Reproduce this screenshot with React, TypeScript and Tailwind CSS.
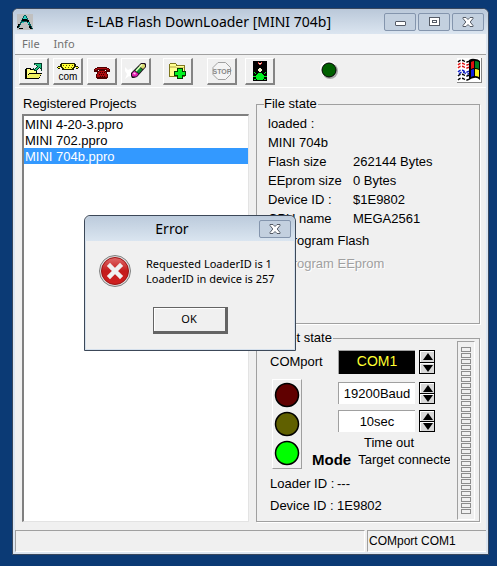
import type { ReactNode } from "react";
import clsx from "clsx";

const projects = ["MINI 4-20-3.ppro", "MINI 702.ppro", "MINI 704b.ppro"];

const fileInfo = [
  { label: "Flash size", value: "262144 Bytes" },
  { label: "EEprom size", value: "0 Bytes" },
  { label: "Device ID :", value: "$1E9802" },
  { label: "CPU name", value: "MEGA2561" },
];

const lamps = ["#600000", "#606000", "#00ff00"];

/* ---------- icons ---------- */

function AppIcon() {
  return (
    <svg width="16" height="16" viewBox="0 0 16 16" shapeRendering="crispEdges">
      <rect width="16" height="16" fill="#c0c0c0" />
      <path d="M6 1h3v1h1v2h1v2h1v2h1v2h1v2h1v2h1v1h-3v-2h-1v-2h-1v-2h-1v-1h-5v1h-1v2h-1v2h-1v1h-1v-2h1v-2h1v-2h1v-2h1v-2h1v-2h1z" fill="#005858" />
      <path d="M7 2h2v2h1v2h-4v-2h1zM5 8h2v1h-2zM11 8h1v2h-1z" fill="#30d0c0" />
      <path d="M5 5h5v1h2v2h-2v-1h-5zM1 10h2v1h-1v2h-1v1h-1v-2h1zM2 14h4v1h-4zM12 12h2v2h1v1h-2v-1h-1z" fill="#000" />
    </svg>
  );
}

function OpenIcon() {
  return (
    <svg width="18" height="16" viewBox="0 0 18 16" shapeRendering="crispEdges">
      <path d="M1 5h5v1h6v4h5v1h-1v2h-1v2h-1v1h-14v-10h1z" fill="#000" />
      <path d="M2 6h3v1h6v3h-7v1h-1v2h-1z" fill="#ffff80" />
      <path d="M4 11h12v1h-1v2h-1v1h-12v-2h1v-1h1z" fill="#f0f060" />
      <path d="M9 0h8v8h-1v-2h-1v-1h-1v1h-1v1h-1v1h-3v-1h-1v-2h1v1h1v-1h1v-1h1v-1h-1v-1h-2z" fill="#003828" />
      <path d="M10 1h6v4h-1v-1h-1v1h-1v1h-1v1h-2v-1h1v-1h1v-1h1v-1h-1v-1h-2z" fill="#20c080" />
    </svg>
  );
}

function ComIcon() {
  return (
    <svg width="24" height="19" viewBox="0 0 24 19">
      <g shapeRendering="crispEdges">
        <path d="M5 1h14v1h1v3h-1v1h-1v2h-12v-2h-1v-1h-1v-3h1z" fill="#202000" />
        <path d="M6 2h12v3h-1v1h-1v1h-8v-1h-1v-1h-1z" fill="#ffff30" />
        <path d="M7 3h1v1h-1zM10 3h1v1h-1zM13 3h1v1h-1zM16 3h1v1h-1zM9 5h1v1h-1zM12 5h1v1h-1zM15 5h1v1h-1z" fill="#605000" />
        <path d="M2 4h2v1h-2zM1 5h1v1h-1zM2 6h2v1h-2zM20 4h2v1h-2zM22 5h1v1h-1zM20 6h2v1h-2z" fill="#202000" />
        <path d="M2 5h2v1h-2zM20 5h2v1h-2z" fill="#ffff30" />
      </g>
      <text x="12" y="18" textAnchor="middle" fontFamily="Liberation Sans, sans-serif" fontSize="10">
        com
      </text>
    </svg>
  );
}

function PhoneIcon() {
  return (
    <svg width="16" height="12" viewBox="0 0 16 12" shapeRendering="crispEdges">
      <path d="M3 0h10v1h2v1h1v3h-4v-2h-1v1h1v1h1v2h1v4h-1v1h-10v-1h-1v-4h1v-2h1v-1h1v-1h-1v2h-4v-3h1v-1h2z" fill="#500000" />
      <path d="M3 1h10v1h2v1h-2v-1h-10v1h-2v-1h2zM5 4h6v1h1v2h1v3h-10v-3h1v-2h1z" fill="#b00c10" />
      <path d="M6 5h1v1h-1zM8 5h1v1h-1zM10 5h1v1h-1zM5 7h1v1h-1zM7 7h1v1h-1zM9 7h1v1h-1zM6 9h1v1h-1zM8 9h1v1h-1zM10 9h1v1h-1z" fill="#380000" />
    </svg>
  );
}

function EraserIcon() {
  return (
    <svg width="24" height="20" viewBox="0 0 24 20">
      <path d="M1 6l3 3 4-2v6l1 4-4-2-4 3 2-5-2-3z" fill="#fff" />
      <path d="M17 2h4l1 1v3L13 16l-3 1H8l-1-2v-3z" fill="#201020" />
      <path d="M17.500 3H20l1 1v2l-2 2-4-3z" fill="#d8d870" />
      <path d="M14.500 5.500l4 3-3.500 4-4-3z" fill="#109030" />
      <path d="M18 3.500L12 10" stroke="#e8ffc0" strokeWidth="1.500" />
      <path d="M10.500 10l4 3-2 2.500H9L8 14.500v-2z" fill="#e020b0" />
      <path d="M9.500 12l2 1" stroke="#ffc0f0" strokeWidth="1.500" />
    </svg>
  );
}

function AddFolderIcon() {
  return (
    <svg width="19" height="18" viewBox="0 0 19 18" shapeRendering="crispEdges">
      <path d="M2 1h6v1h1v1h8v12h-16v-13h1z" fill="#807820" />
      <path d="M2 2h6v2h8v10h-14z" fill="#ffff90" />
      <path d="M2 4h6v1h8v1h-14z" fill="#d8d068" />
      <path d="M9 6h6v3h3v5h-3v3h-6v-3h-3v-5h3z" fill="#003800" />
      <path d="M10 7h4v3h3v3h-3v3h-4v-3h-3v-3h3z" fill="#00f020" />
    </svg>
  );
}

function StopIcon() {
  return (
    <svg width="20" height="18" viewBox="0 0 20 18">
      <path d="M6 .5h7.500l5 5v7l-5 5H6l-5-5v-7z" fill="#f4f4f4" stroke="#a0a0a0" />
      <text x="10" y="12" textAnchor="middle" fontFamily="Liberation Sans, sans-serif" fontSize="7" fontWeight="700" fill="#888">
        STOP
      </text>
    </svg>
  );
}

function TrafficIcon() {
  return (
    <svg width="14" height="20" viewBox="0 0 14 20" shapeRendering="crispEdges">
      <rect width="14" height="20" fill="#000" />
      <path d="M5 1h1v1h2v-1h1v2h-1v1h-2v-1h-1z" fill="#e04848" />
      <path d="M6 2h2v1h-2zM6 7h2v1h1v2h-1v1h-2v-1h-1v-2h1z" fill="#f0f0d0" />
      <path d="M5 12h4v1h1v1h1v4h-1v1h-6v-1h-1v-4h1v-1h1zM1 11h1v1h1v1h-1v-1h-1zM12 11h1v1h-1v1h-1v-1h1zM0 15h3v1h-3zM11 15h3v1h-3zM1 18h2v1h-2zM11 18h2v1h-2z" fill="#00f020" />
    </svg>
  );
}

function WindowsIcon() {
  return (
    <svg width="24" height="24" viewBox="0 0 24 24">
      <rect width="24" height="24" fill="#fff" />
      <g fill="none" strokeWidth="1.500" strokeDasharray="3 1.500">
        <path d="M1 4q3-3 6-1t5 0M1 18q3-3 6-1t5 0M1 22q3-3 6-1t5 0" stroke="#000" />
        <path d="M1 7q3-3 6-1t5 0M1 10q3-3 6-1t5 0" stroke="#e01010" />
        <path d="M1 14q3-3 6-1t5 0M2 16q3-3 6-1t5 0" stroke="#1020c0" />
      </g>
      <path d="M12 2q3-2 6-1 3 0 5 2v19q-3-3-6-2-2 0-5 2z" fill="#000" />
      <path d="M14 4q2-1 3-1v7q-1 0-3 1z" fill="#e01010" />
      <path d="M18 3q2 0 4 1v7q-2-1-4-1z" fill="#008020" />
      <path d="M14 12q2-1 3-1v7q-1 0-3 1z" fill="#1020e0" />
      <path d="M18 11q2 0 4 1v7q-2-1-4-1z" fill="#f8f020" />
    </svg>
  );
}

function CloseGlyph() {
  return (
    <svg width="12" height="10" viewBox="0 0 12 10">
      <path d="M1 .5h3l2 2 2-2h3v1L8.200 5 11 8.500v1H8l-2-2-2 2H1v-1L3.800 5 1 1.500z" fill="#fff" stroke="#555b66" />
    </svg>
  );
}

function ErrorIcon() {
  return (
    <svg width="32" height="32" viewBox="0 0 32 32">
      <defs>
        <linearGradient id="errorRed" x1="0" y1="0" x2="0" y2="1">
          <stop offset="0" stopColor="#e06a6a" />
          <stop offset="0.500" stopColor="#c41c1c" />
          <stop offset="1" stopColor="#d02020" />
        </linearGradient>
      </defs>
      <circle cx="16" cy="16" r="15.500" fill="#dcdcdc" stroke="#808080" />
      <circle cx="16" cy="16" r="13.500" fill="url(#errorRed)" stroke="#9c1414" />
      <path d="M11 11l10 10M21 11L11 21" stroke="#f0f0f0" strokeWidth="4.500" strokeLinecap="square" />
    </svg>
  );
}

/* ---------- small controls ---------- */

function CaptionButton({ label, children }: { label: string; children: ReactNode }) {
  return (
    <button
      aria-label={label}
      className="flex h-[18px] w-8 items-center justify-center rounded-[2px] border border-[#8495ad] bg-[#c3d0df]"
    >
      {children}
    </button>
  );
}

function ToolButton({ label, className, children }: { label: string; className?: string; children: ReactNode }) {
  return (
    <button
      aria-label={label}
      className={clsx(
        "flex h-[27px] w-[30px] items-center justify-center border-t border-r-2 border-b-2 border-l border-t-white border-r-[#858585] border-b-[#858585] border-l-white bg-[#f0f0f0]",
        className
      )}
    >
      {children}
    </button>
  );
}

function Spinner({ label }: { label: string }) {
  return (
    <div className="flex w-4 shrink-0 flex-col gap-px border border-black bg-black">
      <button aria-label={`${label} up`} className="flex flex-1 items-center justify-center border-t border-l border-white bg-[#d8d8d8]">
        <svg width="10" height="7" viewBox="0 0 10 7">
          <path d="M5 0l5 7H0z" />
        </svg>
      </button>
      <button aria-label={`${label} down`} className="flex flex-1 items-center justify-center border-t border-l border-white bg-[#d8d8d8]">
        <svg width="10" height="7" viewBox="0 0 10 7">
          <path d="M5 7l5-7H0z" />
        </svg>
      </button>
    </div>
  );
}

function Group({ title, className, children }: { title: string; className?: string; children: ReactNode }) {
  return (
    <fieldset className={clsx("min-w-0 border border-[#a0a0a0] shadow-[1px_1px_0_#fff]", className)}>
      <legend className="ml-[7px] h-4 bg-[#f0f0f0] pr-px leading-4">{title}</legend>
      {children}
    </fieldset>
  );
}

/* ---------- sections ---------- */

function ErrorDialog() {
  return (
    <div
      role="dialog"
      aria-labelledby="error-title"
      className="absolute top-[206px] left-[71px] flex h-[136px] w-[212px] flex-col rounded-t-md border border-[#3c4858] bg-[#f0f0f0] shadow-[inset_0_0_0_1px_#d5e0ec]"
    >
      <div className="flex h-[25px] items-center rounded-t-md bg-linear-to-b from-[#bccbdc] to-[#dae5f0] pr-1">
        <h2 id="error-title" className="flex-1 text-center font-['Noto_Sans'] text-sm">
          Error
        </h2>
        <CaptionButton label="Close">
          <CloseGlyph />
        </CaptionButton>
      </div>
      <div className="flex items-center gap-[15px] px-[14px] pt-[14px]">
        <ErrorIcon />
        <div className="font-['Noto_Sans'] text-[11px] leading-[15px] whitespace-nowrap">
          <p>Requested LoaderID is 1</p>
          <p>LoaderID in device is 257</p>
        </div>
      </div>
      <button className="mx-auto mt-5 h-[27px] w-[75px] border-t border-r-[3px] border-b-[3px] border-l border-[#646464] bg-[#f0f0f0] font-['Noto_Sans'] text-[11px] shadow-[inset_1px_1px_0_#fff]">
        OK
      </button>
    </div>
  );
}

function TargetState() {
  const field = "h-full w-full min-w-0 border-t border-l border-[#a0a0a0] text-center outline-none";

  return (
    <Group title="Target state" className="flex-1">
      <div className="flex gap-1 pr-1">
        <div className="min-w-0 flex-1 pl-[13px]">
          <div className="grid grid-cols-[64px_1fr_16px] gap-x-1 pt-1 pr-[18px]">
            <label htmlFor="comport" className="leading-6">COMport</label>
            <input id="comport" readOnly value="COM1" className={clsx(field, "bg-black pb-1 text-sm text-[#ffff30]")} />
            <Spinner label="COMport" />
          </div>
          <div className="mt-[5px] flex">
            <div className="flex h-[90px] w-[30px] shrink-0 flex-col items-center justify-around border-t border-r border-b border-l border-t-white border-r-[#a0a0a0] border-b-[#a0a0a0] border-l-white ml-0.5">
              {lamps.map((color) => (
                <svg key={color} width="26" height="26" viewBox="0 0 26 26">
                  <circle cx="13" cy="13" r="11.500" fill={color} stroke="#000" strokeWidth="1.500" />
                </svg>
              ))}
            </div>
            <div className="min-w-0 flex-1 pt-[3px]">
              <div className="mr-[18px] ml-9 flex flex-col gap-[6px]">
                <div className="flex h-[22px] gap-1">
                  <input aria-label="Baud rate" readOnly value="19200Baud" className={clsx(field, "bg-white")} />
                  <Spinner label="Baud rate" />
                </div>
                <div className="flex h-[22px] gap-1">
                  <input id="timeout" readOnly value="10sec" className={clsx(field, "bg-white")} />
                  <Spinner label="Time out" />
                </div>
              </div>
              <label htmlFor="timeout" className="mt-[3px] ml-[62px] block h-4 leading-4">Time out</label>
              <div className="flex items-center gap-[7px] pr-[3px] pl-[10px]">
                <b className="text-[15px] leading-[18px]">Mode</b>
                <span className="min-w-0 flex-1 overflow-hidden leading-[18px] whitespace-nowrap">Target connected</span>
              </div>
            </div>
          </div>
          <dl className="grid grid-cols-[67px_1fr] pt-1 leading-[22px]">
            <dt>Loader ID :</dt>
            <dd>---</dd>
            <dt>Device ID :</dt>
            <dd>1E9802</dd>
          </dl>
        </div>
        <div
          role="meter"
          aria-label="Progress"
          aria-valuenow={0}
          className="-mt-[5px] flex w-[18px] flex-col gap-px border-t border-r border-b border-l border-t-[#a0a0a0] border-r-white border-b-white border-l-[#a0a0a0] px-[3px] py-[5px]"
        >
          {Array.from({ length: 28 }, (_, i) => (
            <div key={i} className="h-[5px] border border-[#8c8c8c]" />
          ))}
        </div>
      </div>
    </Group>
  );
}

export default function App() {
  return (
    <div className="flex min-h-screen bg-[#0b3a75] pt-2 pr-2 pb-[11px] pl-3 font-['Liberation_Sans',sans-serif] text-[13px] text-black">
      <main className="relative flex flex-1 flex-col rounded-t-md border border-[#39485e] bg-[#f0f0f0] shadow-[inset_0_0_0_2px_#dce6f2]">
        {/* title bar */}
        <header className="flex h-[25px] items-center gap-0.5 rounded-t-md bg-linear-to-b from-[#bac8d9] to-[#dbe5f0] px-1">
          <AppIcon />
          <h1 className="flex-1 text-center font-['Noto_Sans'] text-sm whitespace-nowrap">
            E-LAB Flash DownLoader [MINI 704b]
          </h1>
          <CaptionButton label="Minimize">
            <span className="mt-1 h-[5px] w-[11px] rounded-[1px] border border-[#555b66] bg-white" />
          </CaptionButton>
          <CaptionButton label="Maximize">
            <span className="flex h-[9px] w-[11px] items-center justify-center border border-[#555b66] bg-white">
              <span className="h-[3px] w-[5px] border border-[#555b66]" />
            </span>
          </CaptionButton>
          <CaptionButton label="Close">
            <CloseGlyph />
          </CaptionButton>
        </header>

        <nav className="mx-0.5 flex h-5 items-center gap-[14px] bg-[#f5f6f8] pl-[7px] font-['Noto_Sans'] text-[11px] text-[#707070]">
          <button>File</button>
          <button>Info</button>
        </nav>

        {/* toolbar */}
        <div className="mx-0.5 flex h-[34px] items-end border-t border-b border-t-[#a0a0a0] border-b-white px-1 pb-0.5">
          <ToolButton label="Open">
            <OpenIcon />
          </ToolButton>
          <ToolButton label="COM port" className="ml-1 border-2 border-t-[#858585] border-l-[#858585]">
            <ComIcon />
          </ToolButton>
          <ToolButton label="Dial" className="ml-1 pt-1">
            <PhoneIcon />
          </ToolButton>
          <ToolButton label="Erase" className="ml-1">
            <EraserIcon />
          </ToolButton>
          <ToolButton label="Add project" className="ml-3">
            <AddFolderIcon />
          </ToolButton>
          <ToolButton label="Stop" className="ml-[14px]">
            <StopIcon />
          </ToolButton>
          <ToolButton label="Start" className="ml-2">
            <TrafficIcon />
          </ToolButton>
          <svg className="ml-[45px] self-center" width="18" height="18" viewBox="0 0 18 18">
            <circle cx="10" cy="10" r="8" fill="#a8a8a8" />
            <circle cx="8" cy="8" r="8" fill="#fff" />
            <circle cx="9" cy="9" r="7" fill="#006000" stroke="#000" />
          </svg>
          <button aria-label="Windows" className="ml-auto self-center border-r border-b border-[#858585]">
            <WindowsIcon />
          </button>
        </div>

        {/* content */}
        <div className="grid flex-1 grid-cols-[1fr_224px] gap-x-[7px] pt-2 pr-2 pb-2 pl-[9px]">
          <div className="flex flex-col">
            <h2 id="projects-label" className="h-[18px] pl-px leading-4">Registered Projects</h2>
            <ul
              role="listbox"
              aria-labelledby="projects-label"
              className="flex-1 border-t-2 border-r border-b border-l-2 border-t-[#808080] border-r-[#e3e3e3] border-b-[#e3e3e3] border-l-[#808080] bg-white"
            >
              {projects.map((name) => (
                <li
                  key={name}
                  role="option"
                  aria-selected={name === "MINI 704b.ppro"}
                  className="h-4 pl-px leading-[17px] aria-selected:bg-[#3399ff] aria-selected:text-white"
                >
                  {name}
                </li>
              ))}
            </ul>
          </div>

          <div className="flex flex-col gap-[6px]">
            <Group title="File state" className="h-[228px]">
              <div className="pt-0.5 pl-[11px] leading-[19px]">
                <p>loaded :</p>
                <p>MINI 704b</p>
                <dl className="grid grid-cols-[74px_1fr] gap-x-[11px]">
                  {fileInfo.map((row) => (
                    <div key={row.label} className="contents">
                      <dt className="whitespace-nowrap">{row.label}</dt>
                      <dd>{row.value}</dd>
                    </div>
                  ))}
                </dl>
                <label className="mt-[3px] flex items-center gap-[3px]">
                  <input type="checkbox" defaultChecked className="size-[13px]" />
                  Program Flash
                </label>
                <label className="mt-1 flex items-center gap-[3px] text-[#a0a0a0] [text-shadow:1px_1px_0_#fff]">
                  <input type="checkbox" disabled className="size-[13px]" />
                  Program EEprom
                </label>
              </div>
            </Group>
            <TargetState />
          </div>
        </div>

        {/* status bar */}
        <footer className="mx-0.5 mb-[3px] grid h-[21px] grid-cols-[1fr_119px] gap-0.5 text-[12px] leading-5">
          <div className="border-t border-r border-b border-l border-t-[#a0a0a0] border-r-white border-b-white border-l-[#a0a0a0]" />
          <div className="border-t border-b border-l border-t-[#a0a0a0] border-b-white border-l-[#a0a0a0] pl-px">COMport COM1</div>
        </footer>

        <ErrorDialog />
      </main>
    </div>
  );
}
